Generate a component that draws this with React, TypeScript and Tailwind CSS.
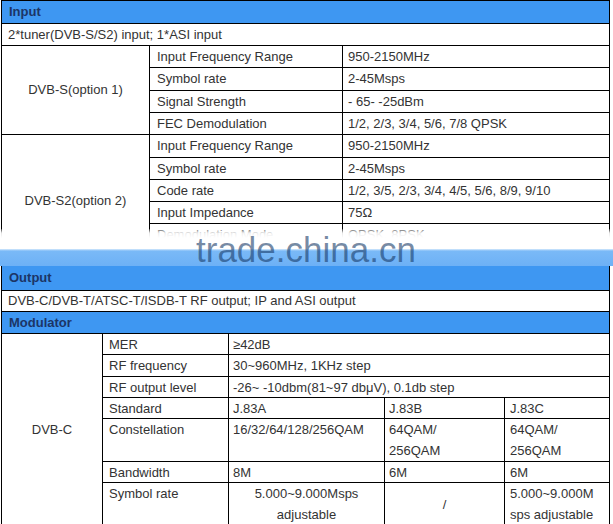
const dvbS: [string, string, string][] = [
  ["Input Frequency Range", "950-2150MHz", "h-[22px]"],
  ["Symbol rate", "2-45Msps", "h-[23px]"],
  ["Signal Strength", "- 65- -25dBm", "h-[22px]"],
  ["FEC Demodulation", "1/2, 2/3, 3/4, 5/6, 7/8 QPSK", "h-[22px]"],
];

const dvbS2: [string, string, string][] = [
  ["Input Frequency Range", "950-2150MHz", "h-[23px]"],
  ["Symbol rate", "2-45Msps", "h-[22px]"],
  ["Code rate", "1/2, 3/5, 2/3, 3/4, 4/5, 5/6, 8/9, 9/10", "h-[22px]"],
  ["Input Impedance", "75Ω", "h-[22px]"],
  ["Demodulation Mode", "QPSK, 8PSK", "h-[22px]"],
  ["LNB Power", "13V/18V", "h-[22px]"],
];

const modWide: [string, string, string][] = [
  ["MER", "≥42dB", "h-[21px]"],
  ["RF frequency", "30~960MHz, 1KHz step", "h-[22px]"],
  ["RF output level", "-26~ -10dbm(81~97 dbμV), 0.1db step", "h-[21px]"],
];

function Header({ title, h }: { title: string; h: string }) {
  return (
    <div
      className={`${h} bg-[#3e97f2] border-b border-black flex items-center pl-[7px] font-bold text-[#1c3566]`}
    >
      {title}
    </div>
  );
}

function SpecRow({ label, value, h }: { label: string; value: string; h: string }) {
  return (
    <div className={`flex ${h} border-b border-black`}>
      <div className="w-[193px] shrink-0 border-r border-black pl-[7px] flex items-center">
        {label}
      </div>
      <div className="flex-1 pl-[5px] flex items-center">{value}</div>
    </div>
  );
}

export default function App() {
  return (
    <div
      className="relative w-[613px] h-[524px] overflow-hidden bg-white text-[13px] text-[#333]"
      style={{ fontFamily: '"Liberation Sans", Arial, sans-serif' }}
    >
      {/* Input table, cut off by the watermark band */}
      <div className="relative h-[249px] overflow-hidden">
        <div className="ml-[1px] w-[609px] border-x border-t border-black">
          <Header title="Input" h="h-[23px]" />
          <div className="h-[22px] border-b border-black flex items-center pl-[6px]">
            2*tuner(DVB-S/S2) input; 1*ASI input
          </div>

          {/* DVB-S */}
          <div className="flex">
            <div className="w-[148px] shrink-0 border-r border-b border-black flex items-center justify-center">
              DVB-S(option 1)
            </div>
            <div className="flex-1 flex flex-col">
              {dvbS.map(([l, v, h]) => (
                <SpecRow key={l} label={l} value={v} h={h} />
              ))}
            </div>
          </div>

          {/* DVB-S2 */}
          <div className="flex">
            <div className="w-[148px] shrink-0 border-r border-black pt-[58px] text-center leading-[16px]">
              DVB-S2(option 2)
            </div>
            <div className="flex-1 flex flex-col">
              {dvbS2.map(([l, v, h]) => (
                <SpecRow key={l} label={l} value={v} h={h} />
              ))}
            </div>
          </div>
        </div>
        <div className="absolute left-0 right-0 top-[229px] h-[20px] bg-[linear-gradient(to_bottom,rgba(255,255,255,0.2)_0%,rgba(255,255,255,0.9)_20%,#fff_45%)]" />
      </div>

      {/* watermark band */}
      <div className="h-[17px] bg-[linear-gradient(to_bottom,#d8ebfc_0px,#7ab9f7_2px,#6db1f6_100%)]" />

      {/* Output + Modulator */}
      <div className="ml-[1px] w-[609px] border-x border-black">
        <Header title="Output" h="h-[25px]" />
        <div className="h-[21px] border-b border-black flex items-center pl-[6px]">
          DVB-C/DVB-T/ATSC-T/ISDB-T RF output; IP and ASI output
        </div>
        <Header title="Modulator" h="h-[22px]" />

        <div className="flex">
          <div className="w-[101px] shrink-0 border-r border-black pt-[88px] text-center leading-[16px]">
            DVB-C
          </div>
          <div className="flex-1 flex flex-col leading-[21px]">
            {modWide.map(([l, v, h]) => (
              <div key={l} className={`flex ${h} border-b border-black`}>
                <div className="w-[126px] shrink-0 border-r border-black pl-[6px] flex items-center">
                  {l}
                </div>
                <div className="flex-1 pl-[4px] flex items-center">{v}</div>
              </div>
            ))}

            <div className="flex h-[21px] border-b border-black">
              <div className="w-[126px] shrink-0 border-r border-black pl-[6px]">Standard</div>
              <div className="w-[156px] shrink-0 border-r border-black pl-[4px]">J.83A</div>
              <div className="w-[120px] shrink-0 border-r border-black pl-[4px]">J.83B</div>
              <div className="flex-1 pl-[5px]">J.83C</div>
            </div>

            <div className="flex h-[43px] border-b border-black">
              <div className="w-[126px] shrink-0 border-r border-black pl-[6px]">Constellation</div>
              <div className="w-[156px] shrink-0 border-r border-black pl-[4px]">
                16/32/64/128/256QAM
              </div>
              <div className="w-[120px] shrink-0 border-r border-black pl-[4px]">
                64QAM/
                <br />
                256QAM
              </div>
              <div className="flex-1 pl-[5px]">
                64QAM/
                <br />
                256QAM
              </div>
            </div>

            <div className="flex h-[21px] border-b border-black">
              <div className="w-[126px] shrink-0 border-r border-black pl-[6px]">Bandwidth</div>
              <div className="w-[156px] shrink-0 border-r border-black pl-[4px]">8M</div>
              <div className="w-[120px] shrink-0 border-r border-black pl-[4px]">6M</div>
              <div className="flex-1 pl-[5px]">6M</div>
            </div>

            <div className="flex h-[44px] border-b border-black">
              <div className="w-[126px] shrink-0 border-r border-black pl-[6px]">Symbol rate</div>
              <div className="w-[156px] shrink-0 border-r border-black text-center">
                5.000~9.000Msps
                <br />
                adjustable
              </div>
              <div className="w-[120px] shrink-0 border-r border-black flex items-center justify-center">
                /
              </div>
              <div className="flex-1 pl-[5px]">
                5.000~9.000M
                <br />
                sps adjustable
              </div>
            </div>
          </div>
        </div>
      </div>

      <div className="absolute left-[196px] top-[232px] text-[35px] leading-none text-[rgba(25,60,105,0.6)] pointer-events-none">
        trade.china.cn
      </div>
    </div>
  );
}
